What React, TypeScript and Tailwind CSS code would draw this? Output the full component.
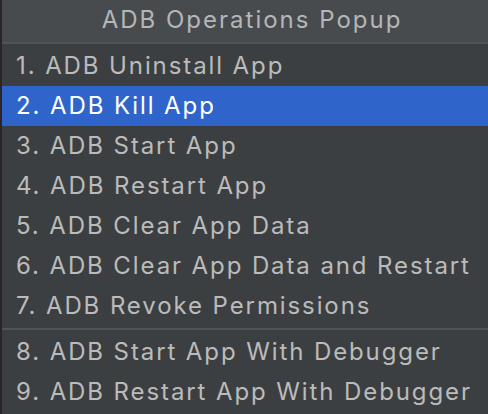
const ITEMS = [
  '1. ADB Uninstall App',
  '2. ADB Kill App',
  '3. ADB Start App',
  '4. ADB Restart App',
  '5. ADB Clear App Data',
  '6. ADB Clear App Data and Restart',
  '7. ADB Revoke Permissions',
]

const DEBUG_ITEMS = ['8. ADB Start App With Debugger', '9. ADB Restart App With Debugger']

export default function App() {
  const selected = 1

  return (
    <div
      className="w-[488px] h-[414px] overflow-hidden flex bg-[#3c3f41]"
      style={{ fontFamily: 'Inter, "Noto Sans", sans-serif' }}
    >
      {/* dark edge of the window behind */}
      <div className="w-[2px] shrink-0 bg-[#2a2628]" />

      <div className="flex-1 flex flex-col">
        {/* Title */}
        <div className="h-[44px] flex items-center justify-center pl-[14px] pb-[3px] bg-[#474b4e] border-b-2 border-[#4f5356]">
          <span className="text-[24px] text-[#b4b6b8] tracking-[2px] whitespace-nowrap">ADB Operations Popup</span>
        </div>

        <div className="h-[2px]" />

        {ITEMS.map((item, i) => (
          <div
            key={item}
            className={`h-[40px] flex items-center pl-[14px] text-[24px] tracking-[1.9px] whitespace-nowrap ${
              i === selected ? 'bg-[#2f65ca] text-white' : 'text-[#bbbbbb]'
            }`}
          >
            {item}
          </div>
        ))}

        <div className="h-[5px] flex items-center">
          <div className="h-[2px] w-full bg-[#505457]" />
        </div>

        {DEBUG_ITEMS.map(item => (
          <div
            key={item}
            className="h-[40px] flex items-center pl-[14px] pt-[2px] text-[24px] tracking-[1.9px] whitespace-nowrap text-[#bbbbbb]"
          >
            {item}
          </div>
        ))}
      </div>
    </div>
  )
}
